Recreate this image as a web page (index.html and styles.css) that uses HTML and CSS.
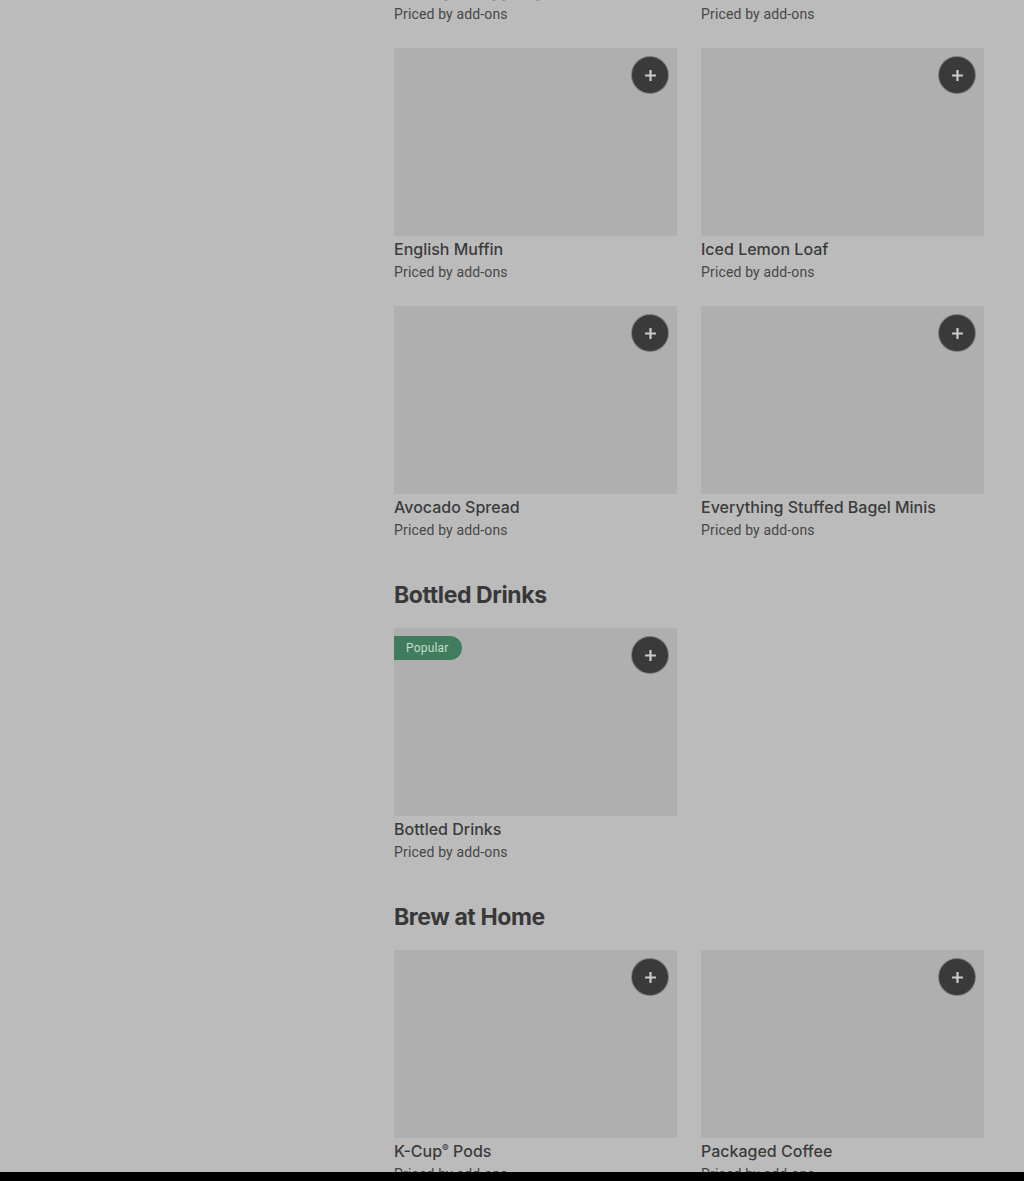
FILE: index.html
```html
<!DOCTYPE html>
<html>

<head>
    <title>Menu</title>
    <link rel="stylesheet" href="styles.css">
</head>

<body>
    <div class="page">
        <aside class="sidebar"></aside>
        <main class="menu">
            <section class="section first">
                <div class="grid">
                    <div class="item">
                        <div class="thumb"><button class="add"><svg viewBox="0 0 12 12"><path d="M6 1v10M1 6h10" /></svg></button></div>
                        <div class="name">Sausage &amp; Egg Bagel Spread</div>
                        <div class="price">Priced by add-ons</div>
                    </div>
                    <div class="item">
                        <div class="thumb"><button class="add"><svg viewBox="0 0 12 12"><path d="M6 1v10M1 6h10" /></svg></button></div>
                        <div class="name">Butter Croissant</div>
                        <div class="price">Priced by add-ons</div>
                    </div>
                    <div class="item">
                        <div class="thumb"><button class="add"><svg viewBox="0 0 12 12"><path d="M6 1v10M1 6h10" /></svg></button></div>
                        <div class="name">English Muffin</div>
                        <div class="price">Priced by add-ons</div>
                    </div>
                    <div class="item">
                        <div class="thumb"><button class="add"><svg viewBox="0 0 12 12"><path d="M6 1v10M1 6h10" /></svg></button></div>
                        <div class="name">Iced Lemon Loaf</div>
                        <div class="price">Priced by add-ons</div>
                    </div>
                    <div class="item">
                        <div class="thumb"><button class="add"><svg viewBox="0 0 12 12"><path d="M6 1v10M1 6h10" /></svg></button></div>
                        <div class="name">Avocado Spread</div>
                        <div class="price">Priced by add-ons</div>
                    </div>
                    <div class="item">
                        <div class="thumb"><button class="add"><svg viewBox="0 0 12 12"><path d="M6 1v10M1 6h10" /></svg></button></div>
                        <div class="name">Everything Stuffed Bagel Minis</div>
                        <div class="price">Priced by add-ons</div>
                    </div>
                </div>
            </section>

            <section class="section">
                <h2>Bottled Drinks</h2>
                <div class="grid">
                    <div class="item">
                        <div class="thumb">
                            <span class="badge">Popular</span>
                            <button class="add"><svg viewBox="0 0 12 12"><path d="M6 1v10M1 6h10" /></svg></button>
                        </div>
                        <div class="name">Bottled Drinks</div>
                        <div class="price">Priced by add-ons</div>
                    </div>
                </div>
            </section>

            <section class="section">
                <h2>Brew at Home</h2>
                <div class="grid">
                    <div class="item">
                        <div class="thumb"><button class="add"><svg viewBox="0 0 12 12"><path d="M6 1v10M1 6h10" /></svg></button></div>
                        <div class="name">K-Cup<span class="reg">®</span> Pods</div>
                        <div class="price">Priced by add-ons</div>
                    </div>
                    <div class="item">
                        <div class="thumb"><button class="add"><svg viewBox="0 0 12 12"><path d="M6 1v10M1 6h10" /></svg></button></div>
                        <div class="name">Packaged Coffee</div>
                        <div class="price">Priced by add-ons</div>
                    </div>
                </div>
            </section>
        </main>
    </div>
    <div class="bottom-bar"></div>
</body>

</html>
```

FILE: styles.css
```css
* {
    margin: 0;
    padding: 0;
    box-sizing: border-box;
}

body {
    font-family: Roboto, "Liberation Sans", sans-serif;
    background: #bbbbbb;
    color: #3b3b3b;
    height: 1181px;
    overflow: hidden;
}

.page {
    display: flex;
}

.sidebar {
    width: 394px;
    flex-shrink: 0;
}

.menu {
    width: 590px;
}

.section {
    padding-top: 39px;
}

.section.first {
    padding-top: 0;
    margin-top: -210px;
}

.section h2 {
    font-family: Inter, "Liberation Sans", sans-serif;
    font-size: 23px;
    font-weight: 700;
    line-height: 32px;
    letter-spacing: -0.4px;
    color: #383838;
    margin-bottom: 17px;
}

.grid {
    display: grid;
    grid-template-columns: 283px 283px;
    column-gap: 24px;
    row-gap: 24px;
}

.thumb {
    position: relative;
    height: 188px;
    background: #afafaf;
}

.add {
    position: absolute;
    top: 8px;
    right: 8px;
    width: 38px;
    height: 38px;
    border-radius: 50%;
    border: 1px solid rgba(255, 255, 255, 0.35);
    background: #3a3a3a;
    display: flex;
    align-items: center;
    justify-content: center;
}

.add svg {
    width: 13px;
    height: 13px;
    stroke: #cccccc;
    stroke-width: 2;
    fill: none;
}

.badge {
    position: absolute;
    top: 8px;
    left: 0;
    height: 24px;
    padding: 0 13px 0 12px;
    background: #3f7d5e;
    color: #c8dbd0;
    font-size: 12px;
    letter-spacing: 0.2px;
    line-height: 24px;
    border-radius: 0 12px 12px 0;
}

.name {
    margin-top: 3px;
    font-family: Inter, "Liberation Sans", sans-serif;
    font-size: 16px;
    font-weight: 500;
    line-height: 20px;
    color: #3b3b3b;
}

.reg {
    font-size: 10px;
    vertical-align: 5px;
    line-height: 0;
}

.price {
    margin-top: 3px;
    font-size: 14px;
    line-height: 20px;
    letter-spacing: 0.15px;
    color: #474747;
}

.bottom-bar {
    position: fixed;
    left: 0;
    right: 0;
    bottom: 0;
    height: 9px;
    background: #000;
}
```
